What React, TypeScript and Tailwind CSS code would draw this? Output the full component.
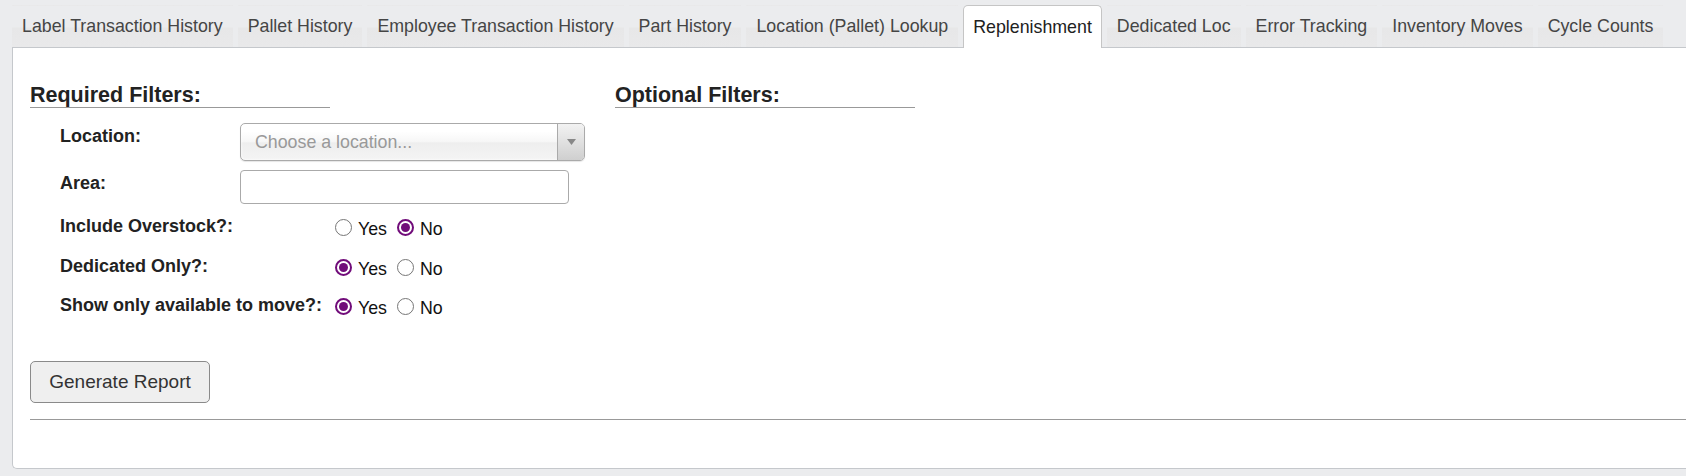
const tabs = [
  'Label Transaction History',
  'Pallet History',
  'Employee Transaction History',
  'Part History',
  'Location (Pallet) Lookup',
  'Replenishment',
  'Dedicated Loc',
  'Error Tracking',
  'Inventory Moves',
  'Cycle Counts',
]

const activeTab = 'Replenishment'

function Radio({ checked }: { checked: boolean }) {
  if (checked) {
    return (
      <span className="flex h-[17px] w-[17px] shrink-0 items-center justify-center rounded-full border-2 border-[#710c7a] bg-white">
        <span className="h-[9px] w-[9px] rounded-full bg-[#710c7a]" />
      </span>
    )
  }
  return <span className="block h-[17px] w-[17px] shrink-0 rounded-full border-[1.5px] border-[#767676] bg-white" />
}

function YesNo({ yes }: { yes: boolean }) {
  return (
    <div className="flex items-start pt-[7px] leading-[20px] text-[#111]">
      <Radio checked={yes} />
      <span className="ml-[6px]">Yes</span>
      <span className="ml-[10px] block">
        <Radio checked={!yes} />
      </span>
      <span className="ml-[6px]">No</span>
    </div>
  )
}

function RadioRow({ label, yes, height }: { label: string; yes: boolean; height: string }) {
  return (
    <div className={`flex ${height}`}>
      <div className="w-[305px] whitespace-nowrap pl-[30px] pt-[4px] text-[18px] font-bold leading-[20px] text-[#222]">
        {label}
      </div>
      <YesNo yes={yes} />
    </div>
  )
}

export default function App() {
  return (
    <div className="h-[476px] w-full overflow-hidden bg-[#ebecee] pl-[12px] pt-[5px] font-['Liberation_Sans',Arial,sans-serif] text-[17.8px]">
      {/* Tab strip */}
      <div className="flex gap-[5px] whitespace-nowrap">
        {tabs.map((tab) =>
          tab === activeTab ? (
            <div
              key={tab}
              className="relative z-10 -mb-[1px] flex h-[43px] items-center rounded-t-[5px] border border-b-0 border-[#c5c5c5] bg-white px-[9px] text-[#212121]"
            >
              {tab}
            </div>
          ) : (
            <div
              key={tab}
              className="flex h-[42px] items-center border border-b-0 border-transparent bg-[linear-gradient(to_bottom,transparent_0%,transparent_50%,#e7e7e8_54%,#e9e9ea_100%)] px-[9px] text-[#454545]"
            >
              {tab}
            </div>
          )
        )}
      </div>

      {/* Panel */}
      <div className="relative h-[422px] rounded-bl-[5px] border border-r-0 border-[#c5c8cc] bg-white pl-[17px] pt-[35px]">
        <div className="flex">
          <div className="w-[585px]">
            <div className="w-[300px] border-b border-[#999] text-[21.5px] font-bold leading-[24px] text-[#222]">
              Required Filters:
            </div>
          </div>
          <div className="w-[300px] border-b border-[#999] text-[21.5px] font-bold leading-[24px] text-[#222]">
            Optional Filters:
          </div>
        </div>

        {/* Location */}
        <div className="mt-[15px] flex">
          <div className="w-[210px] pl-[30px] pt-[3px] text-[18px] font-bold leading-[20px] text-[#222]">Location:</div>
          <div className="flex h-[38px] w-[345px] overflow-hidden rounded-[5px] border border-[#aaa] bg-[linear-gradient(to_bottom,#ffffff_20%,#f6f6f6_50%,#eeeeee_52%,#f4f4f4_100%)] shadow-[0_0_3px_#fff_inset,0_1px_1px_rgba(0,0,0,0.1)]">
            <div className="flex flex-1 items-center pl-[14px] leading-[20px] text-[#999]">Choose a location...</div>
            <div className="flex w-[27px] items-center justify-center border-l border-[#aaa] bg-[linear-gradient(to_bottom,#f2f2f2,#cfcfcf)]">
              <svg width="9" height="6" viewBox="0 0 9 6">
                <path d="M0 0H9L4.5 6Z" fill="#888" />
              </svg>
            </div>
          </div>
        </div>

        {/* Area */}
        <div className="mt-[9px] flex">
          <div className="w-[210px] pl-[30px] pt-[3px] text-[18px] font-bold leading-[20px] text-[#222]">Area:</div>
          <div className="h-[34px] w-[329px] rounded-[4px] border border-[#aaa] bg-white" />
        </div>

        {/* Yes / No filters */}
        <div className="mt-[8px]">
          <RadioRow label="Include Overstock?:" yes={false} height="h-[40px]" />
          <RadioRow label="Dedicated Only?:" yes={true} height="h-[39px]" />
          <RadioRow label="Show only available to move?:" yes={true} height="h-[40px]" />
        </div>

        <button className="mt-[30px] flex h-[42px] w-[180px] items-center justify-center rounded-[5px] border border-[#8a8a8a] bg-[#efefef] text-[19px] text-[#333]">
          Generate Report
        </button>

        <div className="mt-[16px] border-t border-[#999]" />
      </div>
    </div>
  )
}
